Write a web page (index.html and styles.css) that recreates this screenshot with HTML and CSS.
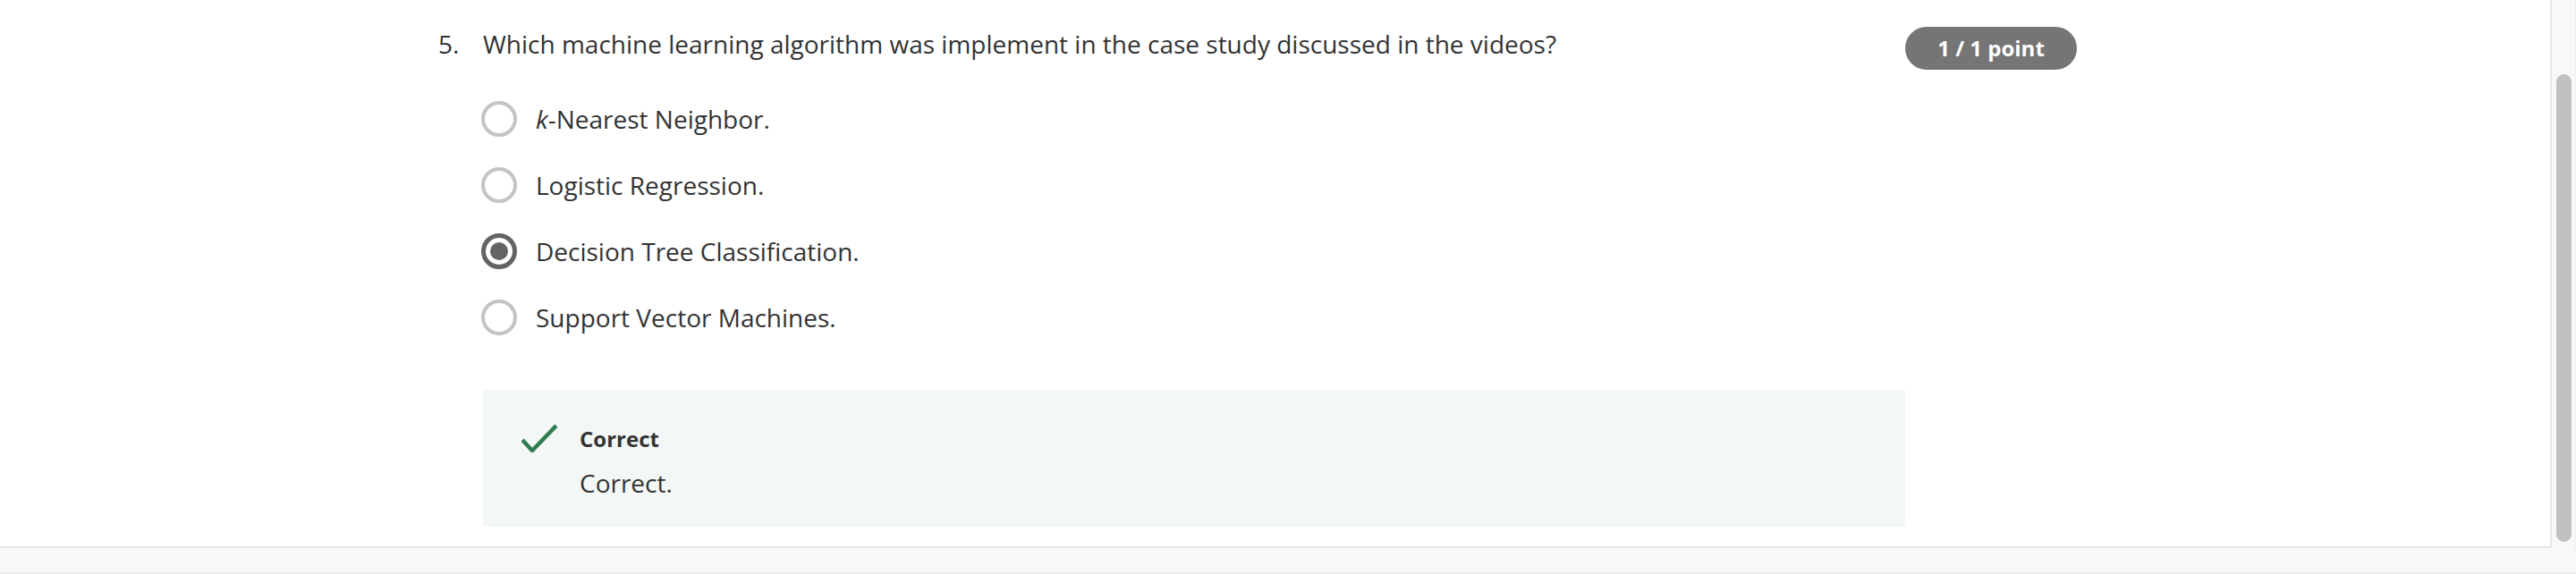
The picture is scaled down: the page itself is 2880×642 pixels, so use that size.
FILE: index.html
```html
<!DOCTYPE html>
<html lang="en">
<head>
<meta charset="utf-8">
<title>Quiz question</title>
<link rel="stylesheet" href="styles.css">
</head>
<body>
<div class="page">
  <div class="viewport">
    <div class="content">
      <div class="question">
        <div class="q-num">5.</div>
        <div class="q-body">
          <div class="q-text">Which machine learning algorithm was implement in the case study discussed in the videos?</div>
          <ul class="options">
            <li class="option"><span class="radio"></span><span class="opt-label"><em>k</em>-Nearest Neighbor.</span></li>
            <li class="option"><span class="radio"></span><span class="opt-label">Logistic Regression.</span></li>
            <li class="option"><span class="radio checked"></span><span class="opt-label">Decision Tree Classification.</span></li>
            <li class="option"><span class="radio"></span><span class="opt-label">Support Vector Machines.</span></li>
          </ul>
          <div class="feedback">
            <svg class="check" width="40" height="31" viewBox="0 0 40 31" aria-hidden="true">
              <polyline points="1,17 12,29 39,1" fill="none" stroke="#2f7f52" stroke-width="4.5"/>
            </svg>
            <div class="fb-text">
              <div class="fb-title">Correct</div>
              <div class="fb-body">Correct.</div>
            </div>
          </div>
        </div>
        <div class="q-score"><span class="badge">1 / 1 point</span></div>
      </div>
    </div>
    <div class="scrollbar"><div class="thumb"></div></div>
  </div>
  <div class="footer"></div>
</div>
</body>
</html>
```

FILE: styles.css
```css
html, body {
  margin: 0;
  padding: 0;
  background: #ffffff;
}
body {
  font-family: "Open Sans", "Noto Sans", sans-serif;
  color: #333333;
}
.page {
  display: flex;
  flex-direction: column;
  height: 642px;
  overflow: hidden;
}
.viewport {
  display: flex;
  height: 613px;
  flex: none;
}
.content {
  flex: 1;
  background: #ffffff;
  border-right: 2px solid #e6e6e6;
  border-bottom: 2px solid #e6e6e6;
  overflow: hidden;
}
.scrollbar {
  width: 27px;
  background: #f8f8f8;
  padding-top: 83px;
  box-sizing: border-box;
  border-right: 1px solid #ececec;
}
.thumb {
  width: 17px;
  height: 523px;
  margin-left: 5px;
  border-radius: 9px;
  background: #c1c1c1;
}
.footer {
  flex: 1;
  background: #f8f8f8;
  border-bottom: 2px solid #ececec;
}
.question {
  display: grid;
  grid-template-columns: 50px 1590px 192px;
  padding-left: 490px;
  padding-top: 28px;
}
.q-num {
  font-size: 28px;
  line-height: 43px;
  color: #333333;
}
.q-text {
  font-size: 28px;
  line-height: 43px;
  color: #333333;
}
.options {
  list-style: none;
  margin: 25px 0 0 -2px;
  padding: 0;
}
.option {
  display: flex;
  align-items: center;
  height: 74px;
  gap: 23px;
}
.radio {
  width: 40px;
  height: 40px;
  box-sizing: border-box;
  border: 4px solid #c4c4c4;
  border-radius: 50%;
  display: flex;
  align-items: center;
  justify-content: center;
  flex: none;
}
.radio.checked {
  border: 5px solid #636363;
}
.radio.checked::after {
  content: "";
  width: 20px;
  height: 20px;
  border-radius: 50%;
  background: #636363;
}
.opt-label {
  font-size: 28px;
  line-height: 40px;
  color: #333333;
  margin-left: -2px;
}
.opt-label em {
  font-style: italic;
}
.feedback {
  margin-top: 44px;
  background: #f3f8f6;
  height: 153px;
  box-sizing: border-box;
  padding: 39px 0 0 43px;
  display: flex;
  gap: 25px;
  align-items: flex-start;
}
.check {
  flex: none;
  display: block;
}
.fb-title {
  font-size: 24px;
  font-weight: 700;
  line-height: 34px;
  margin-top: -1px;
  color: #333333;
}
.fb-body {
  font-size: 28px;
  line-height: 36px;
  margin-top: 14px;
  color: #333333;
}
.q-score {
  display: flex;
  align-items: flex-start;
  padding-top: 2px;
}
.badge {
  display: flex;
  align-items: center;
  justify-content: center;
  width: 192px;
  height: 48px;
  border-radius: 24px;
  background: #757575;
  color: #ffffff;
  font-size: 24px;
  font-weight: 700;
  padding-bottom: 2px;
  box-sizing: border-box;
}
```
